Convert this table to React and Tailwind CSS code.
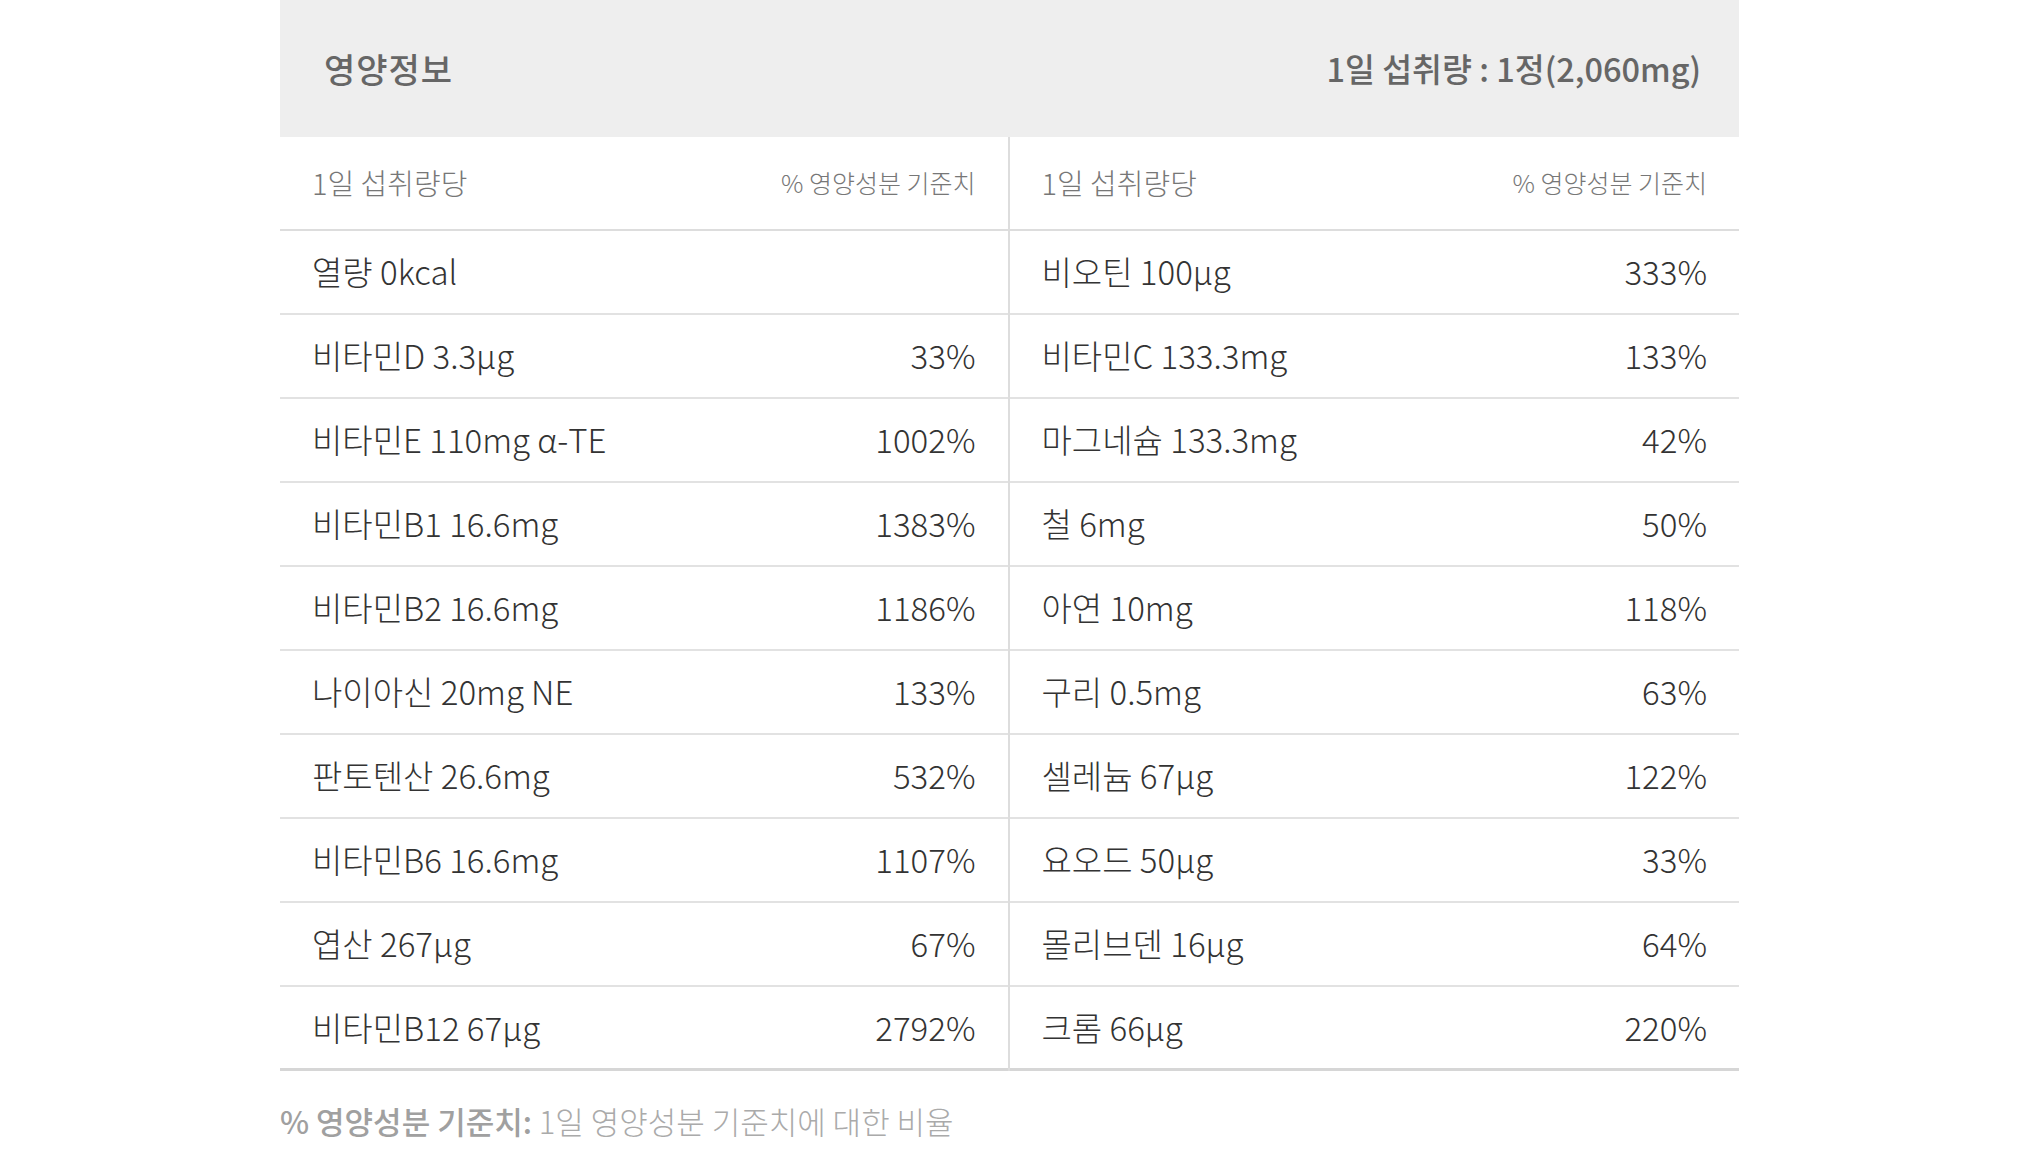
import React from 'react';

const left = [
  ['열량 0kcal', ''],
  ['비타민D 3.3μg', '33%'],
  ['비타민E 110mg α-TE', '1002%'],
  ['비타민B1 16.6mg', '1383%'],
  ['비타민B2 16.6mg', '1186%'],
  ['나이아신 20mg NE', '133%'],
  ['판토텐산 26.6mg', '532%'],
  ['비타민B6 16.6mg', '1107%'],
  ['엽산 267μg', '67%'],
  ['비타민B12 67μg', '2792%'],
];

const right = [
  ['비오틴 100μg', '333%'],
  ['비타민C 133.3mg', '133%'],
  ['마그네슘 133.3mg', '42%'],
  ['철 6mg', '50%'],
  ['아연 10mg', '118%'],
  ['구리 0.5mg', '63%'],
  ['셀레늄 67μg', '122%'],
  ['요오드 50μg', '33%'],
  ['몰리브덴 16μg', '64%'],
  ['크롬 66μg', '220%'],
];

const Column = ({ rows, divider }) => (
  <div
    className={`font-['Noto_Sans_CJK_KR_Light','Noto_Sans_CJK_KR',sans-serif] ${
      divider ? 'border-r-2 border-[#dddddd]' : ''
    }`}
  >
    <div className="h-[94px] flex items-center justify-between px-8 border-b-2 border-[#dddddd] text-[#777777]">
      <span className="text-[29px]">1일 섭취량당</span>
      <span className="text-[25px]">% 영양성분 기준치</span>
    </div>
    {rows.map(([name, pct], i) => (
      <div
        key={name}
        className={`h-[84px] flex items-center justify-between px-8 text-[33px] text-[#333333] ${
          i === rows.length - 1 ? 'border-b-[3px] border-[#d6d6d6]' : 'border-b-2 border-[#e2e2e2]'
        }`}
      >
        <span>{name}</span>
        <span>{pct}</span>
      </div>
    ))}
  </div>
);

export default function App() {
  return (
    <div className="w-[2020px] h-[1152px] bg-white font-['Noto_Sans_CJK_KR','Noto_Sans',sans-serif]">
      <div className="w-[1459px] ml-[280px]">
        <div className="h-[137px] bg-[#eeeeee] flex items-center justify-between pl-[44px] pr-[38px] text-[#666666] font-medium">
          <span className="text-[34px] tracking-[1px]">영양정보</span>
          <span className="text-[32.5px]">1일 섭취량 : 1정(2,060mg)</span>
        </div>
        <div className="grid grid-cols-2">
          <Column rows={left} divider />
          <Column rows={right} />
        </div>
        <p className="mt-[27px] text-[31px] text-[#aaaaaa] font-['Noto_Sans_CJK_KR_Light','Noto_Sans_CJK_KR',sans-serif]">
          <span className="font-medium text-[#a0a0a0] font-['Noto_Sans_CJK_KR',sans-serif]">% 영양성분 기준치:</span> 1일
          영양성분 기준치에 대한 비율
        </p>
      </div>
    </div>
  );
}
